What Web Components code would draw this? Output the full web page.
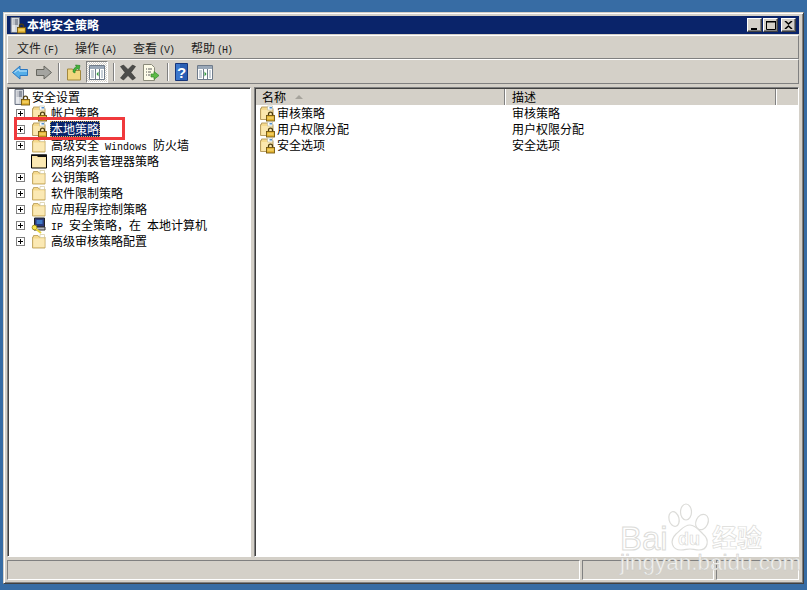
<!DOCTYPE html>
<html lang="zh"><head><meta charset="utf-8"><title>本地安全策略</title>
<style>
html,body{margin:0;padding:0;height:100%}
body{background:#376ca4;overflow:hidden;font:12px/16px "Noto Sans CJK SC","Liberation Sans",sans-serif;color:#000}
</style></head><body>
<mmc-window>
  <mmc-titlebar slot="title">本地安全策略</mmc-titlebar>
  <mmc-menubar slot="menu"></mmc-menubar>
  <mmc-toolbar slot="tools"></mmc-toolbar>
  <mmc-tree slot="left"></mmc-tree>
  <mmc-list slot="right"></mmc-list>
  <mmc-status slot="status"></mmc-status>
</mmc-window>
<mmc-annot></mmc-annot>
<script>
const FOLDER=`<path d="M1.5 14.500V3.500h1V2h6l1 1.500h4.500v11z" fill="#f5d98c" stroke="#b89e62"/><path d="M2.500 5h10.500v9H2.500z" fill="#fbe7ae"/><path d="M8.500 1h5v4h-5z" fill="#fff" stroke="#c2bda2" stroke-width=".7"/><path d="M10.500 2h2.500v1.500h-2.500z" fill="#4f8ed2"/>`;
const LOCK=`<path d="M9.500 11V9.200a2 2 0 0 1 4 0V11" fill="none" stroke="#4d3d10" stroke-width="1.300"/><rect x="7.500" y="10.500" width="8" height="5.500" fill="#e4b534" stroke="#735710" stroke-width=".9"/><path d="M8.500 13h6" stroke="#fbe28a"/>`;
const ICONS={
 server:`<path d="M1 .5h8.500v15H1z" fill="#cfd3da" stroke="#6a7282"/><path d="M2.500 3h5.500M2.500 5h5.500M2.500 7h5.500" stroke="#4c5566"/><path d="M2 1.500h3v13H2z" fill="#fff" opacity=".45"/>`+LOCK,
 folder:FOLDER,
 lockfolder:FOLDER+LOCK,
 plainfolder:`<path d="M1.500 15V4h1V2.500h4.500l1 1.500h6v11z" fill="#f5d98c" stroke="#c4ab6a"/><path d="M2.500 5.500h11V14h-11z" fill="#fbe9b4"/><path d="M9 1.500h4.500v3H9z" fill="#fff" stroke="#d4c99c" stroke-width=".7"/>`,
 blackfolder:`<path d="M.5 2h15v13H.5z" fill="#f8e3a4" stroke="#000"/><path d="M0 1.500h16v2.500H7L6 3H0z" fill="#111"/><path d="M2 5h12v9H2z" fill="#fbe9b4"/>`,
 ipsec:`<path d="M3.500 1h10v9h-10z" fill="#2b3a7c" stroke="#222"/><path d="M5.500 3h6v4h-6z" fill="#3f79c6"/><path d="M3 10h11v3H3z" fill="#b9bcc4" stroke="#333"/><circle cx="3.500" cy="10.500" r="2.400" fill="#f8e64b" stroke="#8c7a10" stroke-width=".8"/><path d="M5 12l5 4" stroke="#e8d43a" stroke-width="2"/>`,
 back:`<path d="M.5 8.500 8 2v3.500h7.500v6H8V15z" fill="#55aee8" stroke="#2a77c0"/><path d="M2.500 8.500 7 5v2h8" fill="none" stroke="#c5e7fb"/>`,
 fwd:`<path d="M16.500 8.500 9 2v3.500H1.500v6H9V15z" fill="#a4a4a0" stroke="#66665f"/>`,
 up:`<path d="M1.500 16V5h5l1 1.500h7V16z" fill="#f2d77f" stroke="#a2883d"/><path d="M7 8c0-3 1.500-4.500 3.500-5L9.500 1l4.500.5L13 6l-1-1.500C10 5 9 6.500 9 9z" fill="#41b53a" stroke="#247a20" stroke-width=".6"/>`,
 tree:`<path d="M.5 .5h15v14H.5z" fill="#fff" stroke="#6f7b8a"/><path d="M1 1h14v3H1z" fill="#9aa8b8"/><path d="M6.500 4v10M10.500 4v10" stroke="#6f7b8a"/><path d="M2 6h3M2 8h3M2 10h3M2 12h3M12 6h2M12 8h2M12 10h2M12 12h2" stroke="#8fa0b0"/><path d="M9.500 6.500v5L7.500 9z" fill="#2c9a3a"/>`,
 del:`<path d="M1.500 2.500l3-1.500 4.500 4.500L13.500 1l3 1.500L12 8.500l4.500 5.500-3 2L9 11.500 4.500 16l-3-2L6 8.500z" fill="#4c4c4a" stroke="#33332f" stroke-width=".6"/>`,
 exp:`<path d="M.5 .5h8l3 3v13H.5z" fill="#fdfbe8" stroke="#8a8a7a"/><path d="M3 5h1M5 5h4M3 8h1M5 8h3M3 11h1M5 11h2" stroke="#5a5a5a"/><path d="M8 10h3V7.500l5 4-5 4V13H8z" fill="#5dbb46" stroke="#34882a" stroke-width=".7"/>`,
 help:`<path d="M.5 .5h12v17H.5z" fill="#2a5fb4" stroke="#16357a"/><path d="M1 1h4v16H1z" fill="#3b77cc"/><text x="6.500" y="14.500" text-anchor="middle" font-family="Liberation Sans" font-weight="700" font-size="15" fill="#fff">?</text>`,
 pane:`<path d="M.5 .5h15v14H.5z" fill="#fff" stroke="#6f7b8a"/><path d="M1 1h14v3H1z" fill="#9aa8b8"/><path d="M6.500 4v10M10.500 4v10" stroke="#6f7b8a"/><path d="M12 6h2M12 8h2M12 10h2M12 12h2M2 6h3M2 8h3M2 10h3M2 12h3" stroke="#8fa0b0"/><path d="M7.500 6.500v5L9.500 9z" fill="#2c9a3a"/>`
};
function def(name,css,html){customElements.define(name,class extends HTMLElement{connectedCallback(){if(this.shadowRoot)return;const r=this.attachShadow({mode:'open'});r.innerHTML=`<style>${css}</style>`+(typeof html==='function'?html(this):html)}})}
def('mmc-icon',':host{display:block;flex:none;line-height:0}svg{display:block;overflow:visible}',h=>{const n=h.getAttribute('name'),w=h.getAttribute('w')||16,g=h.getAttribute('h')||16;return `<svg width="${w}" height="${g}" viewBox="0 0 ${w} ${g}">${ICONS[n]}</svg>`});
def('mmc-window',`
:host{display:flex;flex-direction:column;position:absolute;box-sizing:border-box;left:3px;top:12px;width:801px;height:572px;background:#d4d0c8;
 border:1px solid;border-color:#d4d0c8 #404040 #404040 #d4d0c8;box-shadow:inset 1px 1px 0 #fff,inset -1px -1px 0 #808080;padding:3px 4px 3px 3px}
.panes{flex:1;min-height:0;display:flex;margin-top:3px;gap:3px}
`,`<slot name="title"></slot><slot name="menu"></slot><slot name="tools"></slot><div class="panes"><slot name="left"></slot><slot name="right"></slot></div><slot name="status"></slot>`);
def('mmc-titlebar',`
:host{display:flex;align-items:center;height:18px;background:#0a246a;color:#fff;font:700 12px/18px "Noto Sans CJK SC",sans-serif;padding:0 3px 0 3px}
.t{flex:1;margin-left:1px}
.b{width:15px;height:14px;box-sizing:border-box;background:#d4d0c8;border:1px solid;border-color:#fff #404040 #404040 #fff;box-shadow:inset -1px -1px 0 #808080;display:flex;align-items:center;justify-content:center}
.b+.b{margin-left:1px}.b.x{margin-left:3px}
svg{display:block}
`,`<mmc-icon name="server"></mmc-icon><span class="t"><slot></slot></span>
<span class="b"><svg width="9" height="9"><path d="M1 7h6v2H1z"/></svg></span>
<span class="b"><svg width="10" height="10"><path d="M.5 1.500h9v8h-9z" fill="none" stroke="#000"/><path d="M0 1h10v1.500H0z"/></svg></span>
<span class="b x"><svg width="9" height="8"><path d="M1 0l3.500 3L8 0M1 8l3.500-3L8 8" fill="none" stroke="#000" stroke-width="1.600"/></svg></span>`);
def('mmc-menubar',`
:host{display:flex;height:24px;margin-top:1px;box-sizing:border-box;border:1px solid;border-color:#fff #808080 #808080 #fff;padding:1px 0 0 9px;align-items:center;gap:17px;color:#222}
i{font:normal 10px/1 "Liberation Mono",monospace;letter-spacing:-1px;color:#222;margin-left:2px}span{display:block;white-space:nowrap}
`,`<span>文件<i>(F)</i></span><span>操作<i>(A)</i></span><span>查看<i>(V)</i></span><span>帮助<i>(H)</i></span>`);
def('mmc-toolbar',`
:host{display:flex;height:25px;box-sizing:border-box;border:1px solid;border-color:#fff #808080 #808080 #fff;align-items:center;padding:1px 0 0 4px}
.sep{width:2px;height:18px;background:linear-gradient(90deg,#808080 1px,#fff 1px);flex:none}
.on{width:22px;height:22px;box-sizing:border-box;display:flex;align-items:center;justify-content:center;background:repeating-conic-gradient(#fff 0 25%,#d4d0c8 0 50%) 0 0/2px 2px;border:1px solid;border-color:#808080 #fff #fff #808080}
`,`<mmc-icon name="back" w="17" h="17"></mmc-icon><mmc-icon name="fwd" w="17" h="17" style="margin-left:6px"></mmc-icon><span class="sep" style="margin-left:6px"></span>
<mmc-icon name="up" w="17" h="17" style="margin-left:6px"></mmc-icon><span class="on" style="margin-left:3px"><mmc-icon name="tree" w="16" h="15"></mmc-icon></span>
<span class="sep" style="margin-left:5px"></span><mmc-icon name="del" w="18" h="17" style="margin-left:4px"></mmc-icon><mmc-icon name="exp" w="17" h="17" style="margin-left:6px"></mmc-icon>
<span class="sep" style="margin-left:7px"></span><mmc-icon name="help" w="13" h="18" style="margin-left:6px"></mmc-icon><mmc-icon name="pane" w="16" h="15" style="margin-left:9px"></mmc-icon>`);
def('mmc-tree',`
:host{display:block;width:244px;flex:none;box-sizing:border-box;background:#fff;border:1px solid;border-color:#808080 #fff #fff #808080;box-shadow:inset 1px 1px 0 #404040;padding:1px 0 0 2px;overflow:hidden}
.r{display:flex;height:16px;align-items:center;white-space:nowrap}
.p{width:9px;height:9px;box-sizing:border-box;border:1px solid #808080;margin:0 6px 0 6px;flex:none;background:linear-gradient(#000,#000) center/5px 1px no-repeat,linear-gradient(#000,#000) center/1px 5px no-repeat,#fff}
.n{width:9px;margin:0 6px 0 6px;flex:none}
.l{margin-left:3px;padding:0 1px;height:16px;line-height:16px}
.sel{background:#0a246a;color:#fff;outline:1px dotted #d8c060;outline-offset:-1px}
i{font:normal 10px/1 "Liberation Mono",monospace}
`,`<div class="r" style="padding-left:4px"><mmc-icon name="server"></mmc-icon><span style="margin-left:2px">安全设置</span></div>
<div class="r"><span class="p"></span><mmc-icon name="lockfolder"></mmc-icon><span class="l">帐户策略</span></div>
<div class="r"><span class="p"></span><mmc-icon name="lockfolder"></mmc-icon><span class="l sel">本地策略</span></div>
<div class="r"><span class="p"></span><mmc-icon name="plainfolder"></mmc-icon><span class="l">高级安全<i> Windows </i>防火墙</span></div>
<div class="r"><span class="n"></span><mmc-icon name="blackfolder"></mmc-icon><span class="l">网络列表管理器策略</span></div>
<div class="r"><span class="p"></span><mmc-icon name="plainfolder"></mmc-icon><span class="l">公钥策略</span></div>
<div class="r"><span class="p"></span><mmc-icon name="plainfolder"></mmc-icon><span class="l">软件限制策略</span></div>
<div class="r"><span class="p"></span><mmc-icon name="plainfolder"></mmc-icon><span class="l">应用程序控制策略</span></div>
<div class="r"><span class="p"></span><mmc-icon name="ipsec"></mmc-icon><span class="l"><i>IP </i>安全策略，在<i> </i>本地计算机</span></div>
<div class="r"><span class="p"></span><mmc-icon name="plainfolder"></mmc-icon><span class="l">高级审核策略配置</span></div>`);
def('mmc-list',`
:host{display:block;flex:1;min-width:0;box-sizing:border-box;background:#fff;border:1px solid;border-color:#808080 #fff #fff #808080;box-shadow:inset 1px 1px 0 #404040;padding:1px 0 0 1px;overflow:hidden}
.h{display:flex;height:16px;background:#d4d0c8;line-height:16px}
.c{box-sizing:border-box;padding-left:6px;border-right:1px solid #808080;box-shadow:1px 0 0 #fff;flex:none;position:relative}
.c1{width:249px}.c2{width:271px;padding-left:7px}
.sort{display:inline-block;margin-left:9px;vertical-align:3px;border:4px solid transparent;border-top:0;border-bottom:4px solid #a6a39c}
.r{display:flex;height:16px;align-items:center;white-space:nowrap;padding-left:3px}
.a{width:247px;display:flex;align-items:center;flex:none}
.a span{margin-left:2px}.d{margin-left:6px}
`,`<div class="h"><div class="c c1">名称<span class="sort"></span></div><div class="c c2">描述</div></div>
<div class="r"><div class="a"><mmc-icon name="lockfolder"></mmc-icon><span>审核策略</span></div><div class="d">审核策略</div></div>
<div class="r"><div class="a"><mmc-icon name="lockfolder"></mmc-icon><span>用户权限分配</span></div><div class="d">用户权限分配</div></div>
<div class="r"><div class="a"><mmc-icon name="lockfolder"></mmc-icon><span>安全选项</span></div><div class="d">安全选项</div></div>`);
def('mmc-status',`
:host{display:flex;height:20px;margin-top:3px;gap:2px}
div{box-sizing:border-box;border:1px solid;border-color:#808080 #fff #fff #808080;height:100%}
.a{width:573px;flex:none}.b{width:132px;flex:none}.c{flex:1}
`,`<div class="a"></div><div class="b"></div><div class="c"></div>`);
def('mmc-annot',`
:host{display:block}
.box{position:absolute;left:14px;top:117px;width:111px;height:23px;box-sizing:border-box;border:3px solid #f0393c}
.wm{position:absolute;left:618px;top:503px;width:150px;height:72px;pointer-events:none}
.wm span{position:absolute;white-space:nowrap}
.wm .bai{font:33px/26px "Liberation Sans",sans-serif;color:rgba(255,255,255,.75);-webkit-text-stroke:1px #dcdcd9;left:2px;top:23px}
.wm .jy{left:94px;top:21px;font:700 25px/25px "Noto Sans CJK SC",sans-serif;color:#fff;-webkit-text-stroke:.7px #dcdcd9}
.wm .u{left:2px;top:51px;font:22.500px/18px "Liberation Sans",sans-serif;color:#f1f1ef;-webkit-text-stroke:.4px #c9c9c5}
.wm .du{left:60px;top:27px;font:700 18px/18px "Liberation Sans",sans-serif;color:#fff;-webkit-text-stroke:.6px #d6d6d3}
svg{position:absolute;left:0;top:0}
`,`<div class="box"></div><div class="wm"><svg width="150" height="72" fill="#fff" stroke="#dcdcd9" stroke-width="1.200"><ellipse cx="56" cy="16" rx="5" ry="7.500" transform="rotate(-15 56 16)"/><ellipse cx="68" cy="9" rx="5.500" ry="8"/><ellipse cx="84" cy="19" rx="6" ry="8" transform="rotate(25 84 19)"/><path d="M72 22c5 0 9 5 13 9 7 6 5 16-4 16-4 0-6-1-9-1s-5 1-9 1c-9 0-12-9-5-16 5-4 8-9 14-9z"/></svg><span class="bai">Bai</span><span class="du">du</span><span class="jy">经验</span><span class="u">jingyan.baidu.com</span></div>`);
</script>
</body></html>
